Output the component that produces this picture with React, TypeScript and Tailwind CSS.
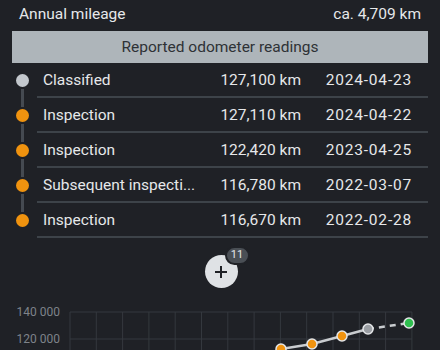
import React from "react";

type Reading = { label: string; km: string; date: string; kind: "classified" | "inspection" };

const readings: Reading[] = [
  { label: "Classified", km: "127,100 km", date: "2024-04-23", kind: "classified" },
  { label: "Inspection", km: "127,110 km", date: "2024-04-22", kind: "inspection" },
  { label: "Inspection", km: "122,420 km", date: "2023-04-25", kind: "inspection" },
  { label: "Subsequent inspecti...", km: "116,780 km", date: "2022-03-07", kind: "inspection" },
  { label: "Inspection", km: "116,670 km", date: "2022-02-28", kind: "inspection" },
];

function Row({ r, first, last }: { r: Reading; first: boolean; last: boolean }) {
  return (
    <div className="flex h-[35px]">
      <div className="flex w-[25px] shrink-0 flex-col items-center">
        <div className={`mb-[2px] w-[3px] flex-1 ${first ? "" : "bg-[#454a51]"}`} />
        <div
          className={`h-[13px] w-[13px] shrink-0 rounded-full ${
            r.kind === "classified" ? "bg-[#c3c8cd]" : "bg-[#f0930f]"
          }`}
        />
        <div className={`mt-[2px] w-[3px] flex-1 ${last ? "" : "bg-[#454a51]"}`} />
      </div>
      <div className="ml-[2px] flex min-w-0 flex-1 items-center border-b-2 border-[#3d4349] pl-[6px] pr-[16px] pt-[3px]">
        <span className="w-[160px] shrink-0 whitespace-nowrap">{r.label}</span>
        <span className="flex-1 text-right">{r.km}</span>
        <span className="w-[111px] shrink-0 text-right tracking-[0.8px]">{r.date}</span>
      </div>
    </div>
  );
}

function Chart() {
  const xs = Array.from({ length: 14 }, (_, i) => 70 + i * 26.3);
  const pts = [
    [281, 349, "#f0930f"],
    [312, 344, "#f0930f"],
    [342, 336, "#f0930f"],
    [368, 329, "#9a9ea3"],
  ] as const;
  return (
    <svg width="440" height="50" viewBox="0 300 440 50" className="block">
      {xs.map((x) => (
        <line key={x} x1={x} y1={312} x2={x} y2={350} stroke="#34383e" strokeWidth="1" />
      ))}
      <line x1={70} y1={312} x2={412} y2={312} stroke="#34383e" strokeWidth="1" />
      <line x1={70} y1={339} x2={412} y2={339} stroke="#34383e" strokeWidth="1" />
      <polyline
        points={pts.map((p) => `${p[0]},${p[1]}`).join(" ")}
        fill="none"
        stroke="#c9cccf"
        strokeWidth="2.5"
      />
      <line x1={368} y1={329} x2={409} y2={323} stroke="#c9cccf" strokeWidth="2.5" strokeDasharray="6 5" />
      {pts.map((p) => (
        <circle key={p[0]} cx={p[0]} cy={p[1]} r="5" fill={p[2]} stroke="#e4e6e8" strokeWidth="1.5" />
      ))}
      <circle cx={409} cy={323} r="5" fill="#2fbf4f" stroke="#e4e6e8" strokeWidth="1.5" />
    </svg>
  );
}

export default function App() {
  return (
    <div
      className="h-[350px] w-[440px] overflow-hidden bg-[#1f2126] text-[15.5px] text-[#e6e8ea]"
      style={{ fontFamily: "Roboto, 'Noto Sans', sans-serif" }}
    >
      <div className="flex h-[28px] items-center justify-between px-[19px] pt-[1px]">
        <span>Annual mileage</span>
        <span>ca. 4,709 km</span>
      </div>
      <div className="mx-[12px] mt-[3px] flex h-[32px] items-center justify-center bg-[#aeb5ba] pt-[1px] text-[#2e3236]">
        Reported odometer readings
      </div>
      <div className="pl-[10px] pr-[12px]">
        {readings.map((r, i) => (
          <Row key={i} r={r} first={i === 0} last={i === readings.length - 1} />
        ))}
      </div>
      <div className="mt-[17px] flex justify-center">
        <div className="relative ml-[2px]">
          <button className="flex h-[33px] w-[33px] items-center justify-center rounded-full bg-[#dfe2e5] text-[#1f2126]">
            <svg width="14" height="14" viewBox="0 0 14 14">
              <path d="M7 1v12M1 7h12" stroke="#1f2126" strokeWidth="2" />
            </svg>
          </button>
          <span className="absolute left-[20px] top-[-9px] flex h-[19px] min-w-[25px] items-center justify-center rounded-full border-2 border-[#1f2126] bg-[#4a4f55] px-[4px] text-[11px] text-[#e6e8ea]">
            11
          </span>
        </div>
      </div>
      <div className="relative mt-[12px]">
        <div className="absolute left-0 top-[4px] flex w-[60px] flex-col items-end gap-[11px] text-[12px] leading-[16px] text-[#7e838a]">
          <span>140 000</span>
          <span>120 000</span>
        </div>
        <Chart />
      </div>
    </div>
  );
}
